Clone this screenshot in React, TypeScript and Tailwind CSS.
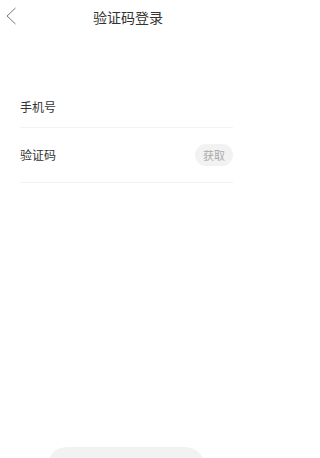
export default function App() {
  return (
    <div
      className="h-[458px] w-[256px] overflow-hidden bg-white"
      style={{ fontFamily: '"Noto Sans CJK SC", "Noto Sans", sans-serif' }}
    >
      {/* Header */}
      <div className="relative flex h-[33px] items-center justify-center">
        <svg
          className="absolute left-[5px] top-[6px]"
          width="12"
          height="20"
          viewBox="0 0 12 20"
          fill="none"
        >
          <polyline points="10.5,2 2,10 10.5,18" stroke="#777" strokeWidth="1" />
        </svg>
        <span className="text-[14px] leading-none text-[#333]">验证码登录</span>
      </div>

      {/* Form */}
      <div className="ml-[20px] mr-[23px] mt-[53px]">
        <div className="flex h-[42px] items-center border-b border-[#f3f3f3]">
          <span className="text-[12px] text-[#333]">手机号</span>
        </div>
        <div className="flex h-[55px] items-center justify-between border-b border-[#f3f3f3]">
          <span className="text-[12px] text-[#333]">验证码</span>
          <button className="flex h-[22px] w-[38px] items-center justify-center rounded-full bg-[#f2f2f2] text-[11px] text-[#aaa]">
            获取
          </button>
        </div>
      </div>

      {/* Submit */}
      <div className="mx-auto mt-[264px] h-[40px] w-[158px] -translate-x-[2px] rounded-full bg-[#f2f2f2]" />
    </div>
  );
}
